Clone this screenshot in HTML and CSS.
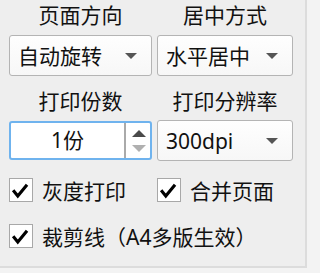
FILE: index.html
```html
<!DOCTYPE html>
<html lang="zh-CN">
<head>
<meta charset="utf-8">
<link rel="stylesheet" href="styles.css">
</head>
<body>
<div class="panel">
  <div class="grid">
    <div class="label">页面方向</div>
    <div class="label">居中方式</div>
    <div class="combo"><span class="val">自动旋转</span><span class="arrow"></span></div>
    <div class="combo"><span class="val">水平居中</span><span class="arrow"></span></div>
    <div class="label label2">打印份数</div>
    <div class="label label2">打印分辨率</div>
    <div class="spin">
      <span class="spin-val">1份</span>
      <span class="spin-btns"><span class="up"></span><span class="down"></span></span>
    </div>
    <div class="combo"><span class="val">300dpi</span><span class="arrow"></span></div>
    <label class="check first"><span class="box"><svg viewBox="0 0 24 24" width="22" height="22"><path d="M4.5 13.5 L8.5 18.5 L17.5 7.5" fill="none" stroke="#000" stroke-width="3.4" stroke-linecap="square"/></svg></span><span>灰度打印</span></label>
    <label class="check first"><span class="box"><svg viewBox="0 0 24 24" width="22" height="22"><path d="M4.5 13.5 L8.5 18.5 L17.5 7.5" fill="none" stroke="#000" stroke-width="3.4" stroke-linecap="square"/></svg></span><span>合并页面</span></label>
    <label class="check wide"><span class="box"><svg viewBox="0 0 24 24" width="22" height="22"><path d="M4.5 13.5 L8.5 18.5 L17.5 7.5" fill="none" stroke="#000" stroke-width="3.4" stroke-linecap="square"/></svg></span><span>裁剪线（A4多版生效）</span></label>
  </div>
</div>
</body>
</html>
```
FILE: styles.css
```css
* { box-sizing: border-box; }
html, body { margin: 0; padding: 0; }
body {
  background: #f3f3f3;
  font-family: "Noto Sans", "Noto Sans CJK SC", sans-serif;
  font-size: 21px;
  color: #111;
  width: 318px;
  height: 273px;
  overflow: hidden;
}
.panel {
  width: 307px;
  height: 268px;
  background: #eeeeee;
  border-right: 2px solid #dcdcdc;
  border-bottom: 2px solid #dcdcdc;
  padding: 2px 0 0 9px;
}
.grid {
  display: grid;
  grid-template-columns: 143px 136px;
  column-gap: 5px;
  align-items: center;
}
.label {
  text-align: center;
  line-height: 26px;
  height: 26px;
  margin-bottom: 7px;
}
.label2 { margin-top: 12px; margin-bottom: 6px; }
.combo {
  height: 41px;
  border: 1px solid #b4b4b4;
  border-radius: 3px;
  background: linear-gradient(#fefefe, #f7f7f7);
  display: flex;
  align-items: center;
  padding: 0 14px 0 8px;
  justify-content: space-between;
}
.val { line-height: 26px; }
.arrow {
  width: 0; height: 0;
  border-left: 6px solid transparent;
  border-right: 6px solid transparent;
  border-top: 6px solid #555;
}
.spin {
  height: 39px;
  border: 2px solid #6fb3ee;
  border-radius: 3px;
  background: #fff;
  display: flex;
}
.spin-val {
  flex: 1;
  text-align: center;
  line-height: 35px;
}
.spin-btns {
  width: 26px;
  border-left: 2px solid #aaaaaa;
  display: flex;
  flex-direction: column;
  align-items: center;
  justify-content: center;
  gap: 8px;
  padding-left: 1px;
}
.up {
  width: 0; height: 0;
  border-left: 7px solid transparent;
  border-right: 7px solid transparent;
  border-bottom: 7px solid #4a4a4a;
}
.down {
  width: 0; height: 0;
  border-left: 7px solid transparent;
  border-right: 7px solid transparent;
  border-top: 7px solid #b0b0b0;
}
.check {
  display: flex;
  align-items: center;
  gap: 9px;
  height: 24px;
  white-space: nowrap;
}
.check.first { margin-top: 17px; }
.check.wide { grid-column: 1 / 3; margin-top: 22px; }
.box {
  width: 24px;
  height: 24px;
  border: 1px solid #a8a8a8;
  background: #fff;
  display: flex;
  align-items: center;
  justify-content: center;
  flex: none;
}
.box svg { display: block; }
```
